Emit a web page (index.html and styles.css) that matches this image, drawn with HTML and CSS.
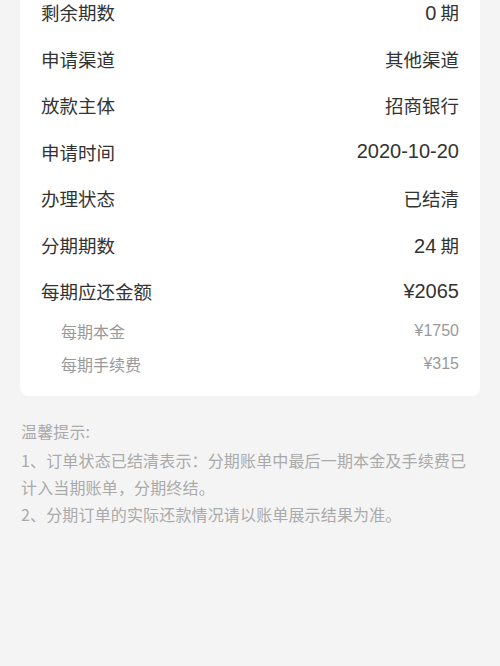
FILE: index.html
```html
<!DOCTYPE html>
<html lang="zh">
<head>
<meta charset="utf-8">
<link rel="stylesheet" href="styles.css">
</head>
<body>
<div class="page">
  <div class="card">
    <div class="row"><span>剩余期数</span><span><span class="num">0</span> 期</span></div>
    <div class="row"><span>申请渠道</span><span>其他渠道</span></div>
    <div class="row"><span>放款主体</span><span>招商银行</span></div>
    <div class="row"><span>申请时间</span><span class="num">2020-10-20</span></div>
    <div class="row"><span>办理状态</span><span>已结清</span></div>
    <div class="row"><span>分期期数</span><span><span class="num">24</span> 期</span></div>
    <div class="row"><span>每期应还金额</span><span class="num">¥2065</span></div>
    <div class="sub"><span>每期本金</span><span class="subnum">¥1750</span></div>
    <div class="sub"><span>每期手续费</span><span class="subnum">¥315</span></div>
  </div>
  <div class="notes">
    <div class="notes-title">温馨提示:</div>
    <p>1、订单状态已结清表示：分期账单中最后一期本金及手续费已计入当期账单，分期终结。</p>
    <p>2、分期订单的实际还款情况请以账单展示结果为准。</p>
  </div>
</div>
</body>
</html>
```
FILE: styles.css
```css
html, body {
  margin: 0;
  padding: 0;
  background: #f4f4f4;
}
body {
  width: 500px;
  height: 666px;
  overflow: hidden;
  font-family: "Noto Sans CJK SC", "Noto Sans", sans-serif;
}
.page {
  padding: 0 20px;
}
.card {
  background: #fff;
  border-radius: 8px;
  margin-top: -31px;
  padding: 20px 21px 15px 21px;
}
.row {
  display: flex;
  justify-content: space-between;
  align-items: center;
  height: 46.5px;
  font-size: 18.5px;
  color: #333;
}
.num {
  font-family: "Liberation Sans", "Noto Sans CJK SC", sans-serif;
  font-size: 20px;
}
.sub {
  display: flex;
  justify-content: space-between;
  align-items: center;
  height: 33px;
  font-size: 16px;
  color: #999;
  padding-left: 20px;
}
.subnum {
  font-family: "Liberation Sans", "Noto Sans CJK SC", sans-serif;
}
.notes {
  margin-top: 22px;
  padding: 0 10px 0 1px;
  font-size: 16px;
  line-height: 27px;
  letter-spacing: 0.15px;
  color: #aaa;
}
.notes-title {
  margin-bottom: 2px;
}
.notes p {
  margin: 0;
}
```
